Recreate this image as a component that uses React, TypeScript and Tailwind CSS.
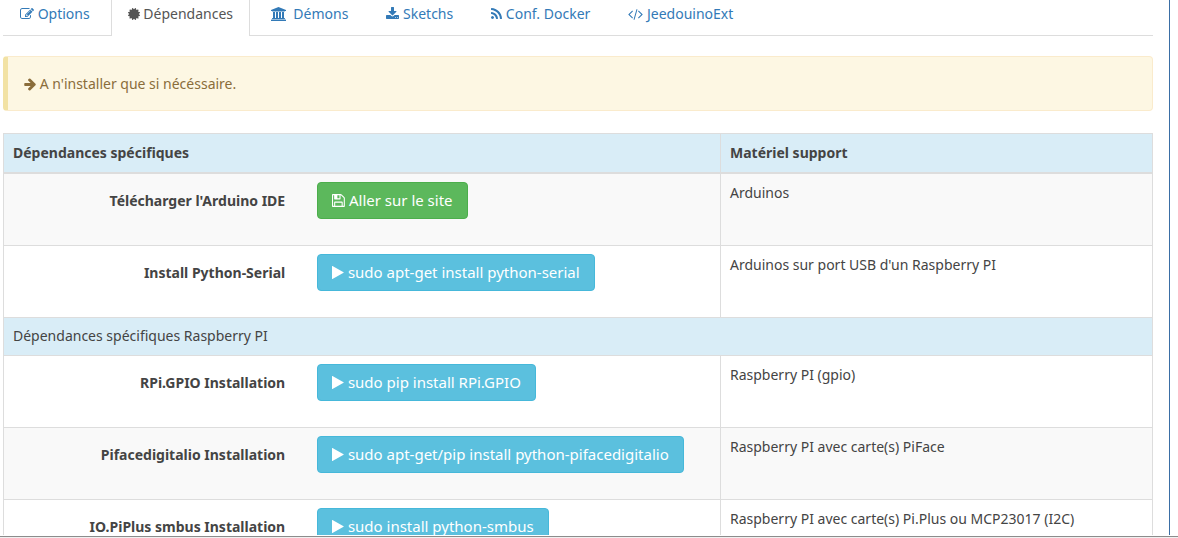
import React from 'react';

type IconName =
  | 'edit'
  | 'certificate'
  | 'university'
  | 'download'
  | 'rss'
  | 'code'
  | 'arrow'
  | 'save'
  | 'play';

const ICONS: Record<IconName, { viewBox: string; d: string }> = {
  edit: {
    viewBox: '0 0 1792 1792',
    d: 'M888 1184l116-116-152-152-116 116v56h96v96h56zm440-720q-16-16-33 1l-350 350q-17 17-1 33t33-1l350-350q17-17 1-33zm80 594v190q0 119-84.5 203.5t-203.5 84.5h-832q-119 0-203.5-84.5t-84.5-203.5v-832q0-119 84.5-203.5t203.5-84.5h832q63 0 117 25 15 7 18 23 3 17-9 29l-49 49q-14 14-32 8-23-6-45-6h-832q-66 0-113 47t-47 113v832q0 66 47 113t113 47h832q66 0 113-47t47-113v-126q0-13 9-22l64-64q15-15 35-7t20 29zm-96-738l288 288-672 672h-288v-288zm444 132l-92 92-288-288 92-92q28-28 68-28t68 28l152 152q28 28 28 68t-28 68z',
  },
  certificate: {
    viewBox: '128 0 1536 1792',
    d: 'M1504 896l138 135q30 28 20 70-12 41-52 51l-188 48 53 186q12 41-19 70-29 31-70 19l-186-53-48 188q-10 40-51 52-12 2-19 2-31 0-51-22l-135-138-135 138q-28 30-70 20-41-11-51-52l-48-188-186 53q-41 12-70-19-31-29-19-70l53-186-188-48q-40-10-52-51-10-42 20-70l138-135-138-135q-30-28-20-70 12-41 52-51l188-48-53-186q-12-41 19-70 29-31 70-19l186 53 48-188q10-41 51-51 41-12 70 19l135 139 135-139q29-30 70-19 41 10 51 51l48 188 186-53q41-12 70 19 31 29 19 70l-53 186 188 48q40 10 52 51 10 42-20 70z',
  },
  university: {
    viewBox: '-128 0 1920 1792',
    d: 'M832 0l960 384v128h-128q0 26-20.5 45t-48.5 19h-1526q-28 0-48.5-19t-20.5-45h-128v-128zm-704 640h256v768h128v-768h256v768h128v-768h256v768h128v-768h256v768h59q28 0 48.5 19t20.5 45v64h-1664v-64q0-26 20.5-45t48.5-19h59v-768zm1595 960q28 0 48.5 19t20.5 45v128h-1920v-128q0-26 20.5-45t48.5-19h1782z',
  },
  download: {
    viewBox: '64 0 1664 1792',
    d: 'M1344 1344q0-26-19-45t-45-19-45 19-19 45 19 45 45 19 45-19 19-45zm256 0q0-26-19-45t-45-19-45 19-19 45 19 45 45 19 45-19 19-45zm128-224v320q0 40-28 68t-68 28h-1472q-40 0-68-28t-28-68v-320q0-40 28-68t68-28h465l135 136q58 56 136 56t136-56l136-136h464q40 0 68 28t28 68zm-325-569q17 41-14 70l-448 448q-18 19-45 19t-45-19l-448-448q-31-29-14-70 17-39 59-39h256v-448q0-26 19-45t45-19h256q26 0 45 19t19 45v448h256q42 0 59 39z',
  },
  rss: {
    viewBox: '192 0 1408 1792',
    d: 'M576 1344q0 80-56 136t-136 56-136-56-56-136 56-136 136-56 136 56 56 136zm512 123q2 28-17 48-18 21-47 21h-135q-25 0-43-16.5t-20-41.5q-22-229-184.5-391.5t-391.5-184.5q-25-2-41.5-20t-16.5-43v-135q0-29 21-47 17-17 43-17h5q160 13 306 80.5t259 181.5q114 113 181.5 259t80.5 306zm512 2q2 27-18 47-18 20-46 20h-143q-26 0-44.5-17.5t-19.5-42.5q-12-215-101-408.5t-231.5-336-336-231.5-408.5-102q-25-1-42.5-19.5t-17.5-43.5v-143q0-28 20-46 18-18 44-18h3q262 13 501.5 120t425.5 294q187 186 294 425.5t120 501.5z',
  },
  code: {
    viewBox: '-64 0 1920 1792',
    d: 'M553 1399l-50 50q-10 10-23 10t-23-10l-466-466q-10-10-10-23t10-23l466-466q10-10 23-10t23 10l50 50q10 10 10 23t-10 23l-393 393 393 393q10 10 10 23t-10 23zm591-1067l-373 1291q-4 13-15.5 19.5t-23.5 2.5l-62-17q-13-4-19.5-15.5t-2.5-24.5l373-1291q4-13 15.5-19.5t23.5-2.5l62 17q13 4 19.5 15.5t2.5 24.5zm657 651l-466 466q-10 10-23 10t-23-10l-50-50q-10-10-10-23t10-23l393-393-393-393q-10-10-10-23t10-23l50-50q10-10 23-10t23 10l466 466q10 10 10 23t-10 23z',
  },
  arrow: {
    viewBox: '96 0 1536 1792',
    d: 'M1600 960q0 54-37 91l-651 651q-39 37-91 37-51 0-90-37l-75-75q-38-38-38-91t38-91l293-293h-704q-52 0-84.5-37.5t-32.5-90.5v-128q0-53 32.5-90.5t84.5-37.5h704l-293-294q-38-36-38-90t38-90l75-75q38-38 90-38 53 0 91 38l651 651q37 35 37 90z',
  },
  save: {
    viewBox: '128 0 1536 1792',
    d: 'M512 1536h768v-384h-768v384zm896 0h128v-896q0-14-10-38.5t-20-34.5l-281-281q-10-10-34-20t-39-10v416q0 40-28 68t-68 28h-576q-40 0-68-28t-28-68v-416h-128v1280h128v-416q0-40 28-68t68-28h832q40 0 68 28t28 68v416zm-384-928v-320q0-13-9.5-22.5t-22.5-9.5h-192q-13 0-22.5 9.5t-9.5 22.5v320q0 13 9.5 22.5t22.5 9.5h192q13 0 22.5-9.5t9.5-22.5zm640 32v928q0 40-28 68t-68 28h-1344q-40 0-68-28t-28-68v-1344q0-40 28-68t68-28h928q40 0 88 20t76 48l280 280q28 28 48 76t20 88z',
  },
  play: {
    viewBox: '192 0 1408 1792',
    d: 'M1576 927l-1328 738q-23 13-39.5 3t-16.5-36v-1472q0-26 16.5-36t39.5 3l1328 738q23 13 23 31t-23 31z',
  },
};

function Icon({ name, className = 'h-[14px]' }: { name: IconName; className?: string }) {
  return (
    <svg
      viewBox={ICONS[name].viewBox}
      fill="currentColor"
      aria-hidden="true"
      className={`inline-block w-auto align-[-2px] ${className}`}
    >
      <path d={ICONS[name].d} />
    </svg>
  );
}

const TABS: { icon: IconName; label: string; active?: boolean }[] = [
  { icon: 'edit', label: 'Options' },
  { icon: 'certificate', label: 'Dépendances', active: true },
  { icon: 'university', label: '\u00a0Démons' },
  { icon: 'download', label: 'Sketchs' },
  { icon: 'rss', label: 'Conf. Docker' },
  { icon: 'code', label: 'JeedouinoExt' },
];

type Dependency = {
  id: string;
  label: string;
  action: string;
  href?: string;
  support: string;
};

const GENERAL: Dependency[] = [
  {
    id: 'arduino-ide',
    label: "Télécharger l'Arduino IDE",
    action: 'Aller sur le site',
    href: '#arduino',
    support: 'Arduinos',
  },
  {
    id: 'python-serial',
    label: 'Install Python-Serial',
    action: 'sudo apt-get install python-serial',
    support: "Arduinos sur port USB d'un Raspberry PI",
  },
];

const RASPBERRY: Dependency[] = [
  {
    id: 'rpi-gpio',
    label: 'RPi.GPIO Installation',
    action: 'sudo pip install RPi.GPIO',
    support: 'Raspberry PI (gpio)',
  },
  {
    id: 'pifacedigitalio',
    label: 'Pifacedigitalio Installation',
    action: 'sudo apt-get/pip install python-pifacedigitalio',
    support: 'Raspberry PI avec carte(s) PiFace',
  },
  {
    id: 'smbus',
    label: 'IO.PiPlus smbus Installation',
    action: 'sudo install python-smbus',
    support: 'Raspberry PI avec carte(s) Pi.Plus ou MCP23017 (I2C)',
  },
];

function DependencyRow({ item, striped }: { item: Dependency; striped: boolean }) {
  return (
    <tr className={striped ? 'bg-[#f9f9f9]' : 'bg-white'}>
      <td className="border border-[#ddd] px-[9px] pt-2 pb-[26px] align-top">
        <div className="flex items-center gap-8">
          <label htmlFor={item.id} className="w-[39%] shrink-0 text-right font-bold">
            {item.label}
          </label>
          {item.href ? (
            <a
              id={item.id}
              href={item.href}
              className="rounded-[4px] border border-[#4cae4c] bg-[#5cb85c] px-[14px] py-[7px] text-[15px] leading-[21px] whitespace-nowrap text-white"
            >
              <Icon name="save" className="h-[15px]" /> {item.action}
            </a>
          ) : (
            <button
              id={item.id}
              type="button"
              className="rounded-[4px] border border-[#46b8da] bg-[#5bc0de] px-[14px] py-[7px] text-[15px] leading-[21px] whitespace-nowrap text-white"
            >
              <Icon name="play" className="h-[15px]" /> {item.action}
            </button>
          )}
        </div>
      </td>
      <td className="border border-[#ddd] p-[9px] align-top">{item.support}</td>
    </tr>
  );
}

export default function App() {
  return (
    <div className="flex h-screen flex-col overflow-hidden bg-white font-['Noto_Sans',sans-serif] text-[14px] leading-5 text-[#444]">
      <main className="mr-2 min-h-0 flex-1 overflow-hidden border-r border-[#3a6ea5] pr-4 pl-[3px]">
        <nav className="flex gap-1 border-b border-[#ddd]">
          {TABS.map((tab) => (
            <a
              key={tab.label}
              href="#"
              aria-current={tab.active ? 'page' : undefined}
              className={
                tab.active
                  ? '-mb-px border-x border-[#ddd] bg-white px-4 pt-1 pb-[12px] whitespace-nowrap text-[#555]'
                  : 'border-x border-transparent px-4 pt-1 pb-[11px] whitespace-nowrap text-[#337ab7]'
              }
            >
              <Icon name={tab.icon} /> {tab.label}
            </a>
          ))}
        </nav>

        <div
          role="note"
          className="mt-5 mb-[22px] rounded-[4px] border border-l-[5px] border-[#faebcc] border-l-[#f2e2a4] bg-[#fdf7e3] px-4 py-4 leading-[21px] text-[#8a6d3b]"
        >
          <Icon name="arrow" /> A n'installer que si nécéssaire.
        </div>

        <table className="w-full table-fixed border-collapse border border-[#ddd]">
          <colgroup>
            <col className="w-[62.4%]" />
            <col />
          </colgroup>
          <thead>
            <tr className="bg-[#d9edf7] text-left">
              <th className="border border-b-2 border-[#ddd] p-[9px] font-bold">Dépendances spécifiques</th>
              <th className="border border-b-2 border-[#ddd] p-[9px] font-bold">Matériel support</th>
            </tr>
          </thead>
          <tbody>
            {GENERAL.map((item, idx) => (
              <DependencyRow key={item.id} item={item} striped={idx % 2 === 0} />
            ))}
            <tr className="bg-[#d9edf7]">
              <td colSpan={2} className="border border-[#ddd] px-[9px] pt-2 pb-[9px]">
                Dépendances spécifiques Raspberry PI
              </td>
            </tr>
            {RASPBERRY.map((item, idx) => (
              <DependencyRow key={item.id} item={item} striped={idx % 2 === 1} />
            ))}
          </tbody>
        </table>
      </main>
      <footer className="mt-px h-[2px] shrink-0 border-t border-[#8c8c8c] bg-[#f0f0f0]" />
    </div>
  );
}
